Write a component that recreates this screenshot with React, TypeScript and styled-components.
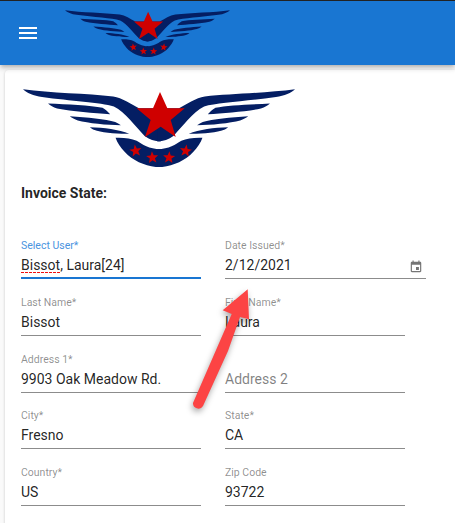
import React from 'react';
import styled, { createGlobalStyle } from 'styled-components';

const GlobalStyle = createGlobalStyle`
  html, body {
    margin: 0;
    height: 523px;
    overflow: hidden;
    background: #fafafa;
    font-family: Roboto, "Liberation Sans", sans-serif;
  }
`;

const Page = styled.div`
  position: relative;
  width: 455px;
  height: 523px;
  overflow: hidden;
  border-top: 1px solid #222;
  box-sizing: border-box;
`;

const AppBar = styled.header`
  position: relative;
  z-index: 2;
  display: flex;
  align-items: center;
  height: 64px;
  padding-left: 16px;
  background: #1976d2;
  box-shadow: 0 2px 4px -1px rgba(0, 0, 0, 0.2), 0 4px 5px rgba(0, 0, 0, 0.14);
`;

const MenuIcon = styled.svg`
  width: 24px;
  height: 24px;
  margin-right: 25px;
  fill: #fff;
`;

const Logo = styled.svg<{ $width: number; $height: number }>`
  display: block;
  width: ${p => p.$width}px;
  height: ${p => p.$height}px;
`;

const CardLogo = styled.div`
  margin-left: 2px;
`;

const Card = styled.main`
  margin: 5px 0 0 5px;
  padding: 19px 0 0 16px;
  height: 460px;
  background: #fff;
  border-radius: 4px 0 0 4px;
  box-shadow: 0 1px 3px rgba(0, 0, 0, 0.2);
`;

const SectionTitle = styled.h3`
  margin: 18px 0 0;
  font-size: 14px;
  line-height: 16px;
  font-weight: 700;
  color: rgba(0, 0, 0, 0.87);
`;

const FieldGrid = styled.div`
  display: grid;
  grid-template-columns: 180px 180px;
  grid-auto-rows: 56.75px;
  column-gap: 24px;
  margin-top: 38px;
`;

const Field = styled.div<{ $wide?: boolean }>`
  width: ${p => (p.$wide ? '201px' : '180px')};
`;

const Label = styled.div<{ $focused?: boolean }>`
  font-size: 10.5px;
  line-height: 14px;
  color: ${p => (p.$focused ? '#4a94e0' : 'rgba(0, 0, 0, 0.45)')};
`;

const ValueRow = styled.div<{ $focused?: boolean }>`
  display: flex;
  align-items: center;
  justify-content: space-between;
  box-sizing: border-box;
  height: 25px;
  margin-top: 1px;
  padding-bottom: 2px;
  border-bottom: ${p => (p.$focused ? '2px solid #1976d2' : '1px solid #8c8c8c')};
`;

const Value = styled.span<{ $placeholder?: boolean }>`
  font-size: 14px;
  line-height: 20px;
  color: ${p => (p.$placeholder ? 'rgba(0, 0, 0, 0.5)' : 'rgba(0, 0, 0, 0.87)')};
`;

const Misspelled = styled.span`
  background: repeating-linear-gradient(90deg, #f01010 0 3px, transparent 3px 4px) 0 100% / 100% 1px no-repeat;
`;

const CalendarIcon = styled.svg`
  width: 14px;
  height: 14px;
  margin-right: 3px;
  margin-top: 3px;
  fill: #757575;
`;

const Arrow = styled.svg`
  position: absolute;
  left: 180px;
  top: 280px;
  width: 80px;
  height: 140px;
  overflow: visible;
  filter: drop-shadow(-1px 3px 3px rgba(0, 0, 0, 0.35));
`;

const starPoints = (cx: number, cy: number, outer: number, inner: number, tilt = 0) =>
  Array.from({ length: 10 }, (_, i) => {
    const r = i % 2 ? inner : outer;
    const a = ((-90 + tilt + i * 36) * Math.PI) / 180;
    return `${(cx + r * Math.cos(a)).toFixed(1)},${(cy + r * Math.sin(a)).toFixed(1)}`;
  }).join(' ');

const Wing = () => (
  <>
    <path d="M68 269 C150 280 260 282 338 290 C365 294 390 312 415 325 L480 325 L480 424 C462 424 445 418 432 408 C405 380 375 338 340 320 C300 308 210 304 125 292 C100 288 78 280 68 269 Z" />
    <path d="M143 311 C200 314 270 316 306 324 C316 330 322 336 329 343 C280 340 215 335 170 326 C158 322 150 317 143 311 Z" />
    <path d="M208 349 C260 352 315 358 344 366 C350 369 356 372 361 376 C320 376 262 370 232 362 C222 358 215 354 208 349 Z" />
    <path d="M268 382 C310 383 355 389 386 401 C350 402 300 397 282 390 C276 388 272 385 268 382 Z" />
    <path d="M345 413 C370 412 392 415 408 422 C425 432 445 447 480 447 L480 501 C440 500 400 485 372 455 C360 442 350 428 345 413 Z" />
  </>
);

const WingsLogo: React.FC<{ width: number; height: number }> = ({ width, height }) => (
  <Logo $width={width} $height={height} viewBox="68 268 814 232" preserveAspectRatio="none">
    <g fill="#041e63">
      <Wing />
      <g transform="translate(950 0) scale(-1 1)">
        <Wing />
      </g>
    </g>
    <g fill="#cf0000">
      <polygon points="478,277 500,325 552,325 510,360 525,411 480,380 433,411 450,360 408,325 457,325" />
      <polygon points={starPoints(405, 452, 19, 8, -8)} />
      <polygon points={starPoints(455, 472, 19, 8, -4)} />
      <polygon points={starPoints(505, 472, 19, 8, 4)} />
      <polygon points={starPoints(555, 452, 19, 8, 8)} />
    </g>
  </Logo>
);

interface FieldData {
  label: string;
  value: string;
  placeholder?: boolean;
}

const restFields: FieldData[] = [
  { label: 'Last Name*', value: 'Bissot' },
  { label: 'First Name*', value: 'Laura' },
  { label: 'Address 1*', value: '9903 Oak Meadow Rd.' },
  { label: '', value: 'Address 2', placeholder: true },
  { label: 'City*', value: 'Fresno' },
  { label: 'State*', value: 'CA' },
  { label: 'Country*', value: 'US' },
  { label: 'Zip Code', value: '93722' },
];

const App: React.FC = () => (
  <Page>
    <GlobalStyle />
    <AppBar>
      <MenuIcon viewBox="0 0 24 24">
        <path d="M3 18h18v-2H3v2zm0-5h18v-2H3v2zm0-7v2h18V6H3z" />
      </MenuIcon>
      <WingsLogo width={165} height={47} />
    </AppBar>
    <Card>
      <CardLogo>
        <WingsLogo width={272} height={78} />
      </CardLogo>
      <SectionTitle>Invoice State:</SectionTitle>
      <FieldGrid>
        <Field>
          <Label $focused>Select User*</Label>
          <ValueRow $focused>
            <Value>
              <Misspelled>Bissot</Misspelled>, Laura[24]
            </Value>
          </ValueRow>
        </Field>
        <Field $wide>
          <Label>Date Issued*</Label>
          <ValueRow>
            <Value>2/12/2021</Value>
            <CalendarIcon viewBox="0 0 24 24">
              <path d="M17 12h-5v5h5v-5zM16 1v2H8V1H6v2H5c-1.11 0-1.99.9-1.99 2L3 19c0 1.1.89 2 2 2h14c1.1 0 2-.9 2-2V5c0-1.1-.9-2-2-2h-1V1h-2zm3 18H5V8h14v11z" />
            </CalendarIcon>
          </ValueRow>
        </Field>
        {restFields.map(field => (
          <Field key={field.value}>
            <Label>{field.label || '\u00a0'}</Label>
            <ValueRow>
              <Value $placeholder={field.placeholder}>{field.value}</Value>
            </ValueRow>
          </Field>
        ))}
      </FieldGrid>
    </Card>
    <Arrow viewBox="180 280 80 140">
      <path
        d="M231.7 313 L222.7 309.3 L247.7 288.3 L249 318.3 L240 316 L228 350 L203 405 A5.4 5.4 0 0 1 193 402 Z"
        fill="#fc4444"
      />
    </Arrow>
  </Page>
);

export default App;
